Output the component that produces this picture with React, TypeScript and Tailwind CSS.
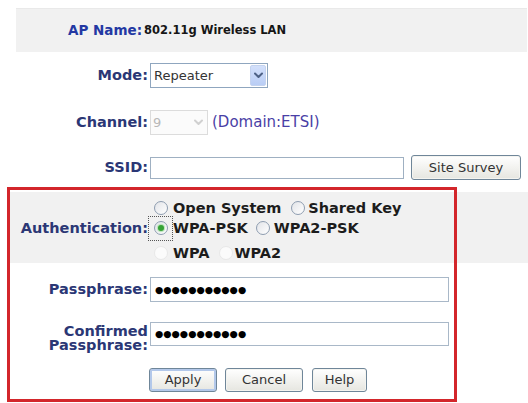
import React from "react";

const labelCls =
  "text-right font-bold text-[14.5px] leading-none text-[#2b3775] whitespace-nowrap";

function Radio({ checked, disabled }: { checked?: boolean; disabled?: boolean }) {
  if (disabled) {
    return (
      <span className="block w-[14px] h-[14px] rounded-full border border-[#e8e8e8] bg-[#fbfbfb]" />
    );
  }
  return (
    <span className="flex w-[14px] h-[14px] rounded-full border border-[#8e9db0] bg-gradient-to-br from-[#e2e4e8] to-white items-center justify-center">
      {checked && (
        <span className="block w-[6px] h-[6px] rounded-full bg-[#36a336] shadow-[0_0_1px_1px_#b4e2b4]" />
      )}
    </span>
  );
}

function Chevron({ color }: { color: string }) {
  return (
    <svg width="9" height="7" viewBox="0 0 9 7">
      <path d="M1 1.5 L4.5 5 L8 1.5" fill="none" stroke={color} strokeWidth="2" strokeLinecap="round" strokeLinejoin="round" />
    </svg>
  );
}

function XPButton({ children, w, def }: { children: React.ReactNode; w: string; def?: boolean }) {
  return (
    <div
      className={
        "flex items-center justify-center h-[24px] rounded-[3px] border border-[#6f8699] bg-gradient-to-b from-white to-[#e6e6e0] text-[13px] text-[#333] " +
        w +
        (def ? " shadow-[inset_0_0_0_2px_#b3c8ea]" : " shadow-[inset_0_0_0_1px_#f4f4f0]")
      }
    >
      {children}
    </div>
  );
}

export default function App() {
  return (
    <div className="relative w-[528px] h-[403px] bg-white overflow-hidden font-['DejaVu_Sans',sans-serif]">
      <div className="pt-[8px]">
        {/* AP Name band */}
        <div className="ml-[16px] mr-[1px] h-[44px] bg-[#f1f1f1] border-t border-[#e9e9e9] flex items-center pl-[52px]">
          <span className="text-[13.5px] font-bold leading-none text-[#2338a3]">AP Name:</span>
          <span className="ml-[2px] text-[11.5px] font-bold leading-none text-[#161616]">802.11g Wireless LAN</span>
        </div>

        {/* Mode */}
        <div className="mt-[11px] h-[25px] flex items-center">
          <div className={labelCls + " w-[148px]"}>Mode:</div>
          <div className="ml-[2px] w-[118px] h-[25px] border border-[#8fa6bf] bg-white flex items-center">
            <span className="pl-[3px] flex-1 text-[13px] text-[#333] leading-none">Repeater</span>
            <span className="mr-[1px] w-[16px] h-[21px] rounded-[2px] bg-gradient-to-b from-[#d3e0fb] to-[#b9cdf5] border border-[#c4d3ef] flex items-center justify-center">
              <Chevron color="#4d6185" />
            </span>
          </div>
        </div>

        {/* Channel */}
        <div className="mt-[22px] h-[25px] flex items-center">
          <div className={labelCls + " w-[148px]"}>Channel:</div>
          <div className="ml-[2px] w-[58px] h-[25px] border border-[#dcdcdc] bg-[#fbfbfb] flex items-center">
            <span className="pl-[2px] flex-1 text-[13px] text-[#b8b8b8] leading-none">9</span>
            <span className="mr-[1px] w-[16px] h-[21px] flex items-center justify-center">
              <Chevron color="#d0d0d0" />
            </span>
          </div>
          <span className="ml-[4px] text-[15px] leading-none text-[#4a3fa6]">(Domain:ETSI)</span>
        </div>

        {/* SSID */}
        <div className="mt-[20px] h-[25px] flex items-center">
          <div className={labelCls + " w-[148px]"}>SSID:</div>
          <div className="ml-[2px] w-[254px] h-[22px] border border-[#9fb0c2] bg-white" />
          <div className="ml-[7px]">
            <XPButton w="w-[110px] !h-[25px]">Site Survey</XPButton>
          </div>
        </div>

        {/* Authentication */}
        <div className="mt-[12px] ml-[8px] h-[71px] bg-[#f1f1f1] flex">
          <div className={labelCls + " w-[140px] self-center mt-[2px]"}>Authentication:</div>
          <div className="flex flex-col pt-[6px] text-[14.5px] font-bold leading-none text-[#1c1c1c]">
            <div className="h-[20px] flex items-center">
              <span className="w-[25px] flex justify-center">
                <Radio />
              </span>
              <span>Open System</span>
              <span className="ml-[10px] mr-[3px]">
                <Radio />
              </span>
              <span>Shared Key</span>
            </div>
            <div className="h-[20px] flex items-center">
              <span className="w-[25px] h-[25px] border border-dotted border-[#555] flex items-center justify-center">
                <Radio checked />
              </span>
              <span>WPA-PSK</span>
              <span className="ml-[8px] mr-[4px]">
                <Radio />
              </span>
              <span>WPA2-PSK</span>
            </div>
            <div className="mt-[5px] h-[20px] flex items-center">
              <span className="w-[25px] flex justify-center">
                <Radio disabled />
              </span>
              <span>WPA</span>
              <span className="ml-[9px] mr-[2px]">
                <Radio disabled />
              </span>
              <span>WPA2</span>
            </div>
          </div>
        </div>

        {/* Passphrase */}
        <div className="mt-[14px] h-[25px] flex items-center">
          <div className={labelCls + " w-[148px]"}>Passphrase:</div>
          <div className="ml-[2px] w-[299px] h-[25px] border border-[#a9b8c8] bg-white flex items-center pl-[4px]">
            <span className="text-[9.5px] leading-none text-black tracking-[0px]">●●●●●●●●●●●</span>
          </div>
        </div>

        {/* Confirmed */}
        <div className="mt-[20px] h-[24px] flex items-center">
          <div className={labelCls + " w-[148px] mt-[8px] leading-[16px]"}>
            Confirmed
            <br />
            Passphrase:
          </div>
          <div className="ml-[2px] w-[299px] h-[24px] border border-[#a9b8c8] bg-white flex items-center pl-[4px]">
            <span className="text-[9.5px] leading-none text-black">●●●●●●●●●●●</span>
          </div>
        </div>

        {/* Buttons */}
        <div className="mt-[22px] h-[24px] flex items-center pl-[149px]">
          <XPButton w="w-[68px]" def>
            Apply
          </XPButton>
          <div className="ml-[8px]">
            <XPButton w="w-[78px]">Cancel</XPButton>
          </div>
          <div className="ml-[9px]">
            <XPButton w="w-[55px]">Help</XPButton>
          </div>
        </div>
      </div>

      {/* red annotation box */}
      <div className="absolute left-[7px] top-[187px] w-[450px] h-[215px] border-[3px] border-[#d3262b] pointer-events-none" />
    </div>
  );
}
